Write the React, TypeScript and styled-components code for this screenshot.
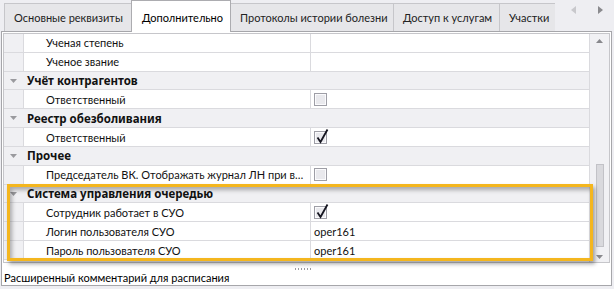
import React from "react";
import styled, { createGlobalStyle } from "styled-components";

const Global = createGlobalStyle`
  html, body { margin: 0; padding: 0; background: #eeeef2; }
  body { font-family: Lato, "Liberation Sans", Arial, sans-serif; font-size: 11px; color: #000; }
`;

const Root = styled.div`
  position: relative;
  width: 614px;
  height: 289px;
  overflow: hidden;
  background: #eeeef2;
`;

const TabStrip = styled.div`
  display: flex;
  height: 31px;
  padding-left: 4px;
`;

const TabList = styled.div`
  display: flex;
  align-items: flex-end;
  width: 551px;
  height: 32px;
  overflow: hidden;
  position: relative;
  z-index: 1;
`;

const Tab = styled.div<{ $active?: boolean; $w: number }>`
  box-sizing: border-box;
  flex: none;
  width: ${(p) => p.$w}px;
  height: ${(p) => (p.$active ? 32 : 28)}px;
  margin-bottom: ${(p) => (p.$active ? 0 : 1)}px;
  margin-right: -1px;
  padding: ${(p) => (p.$active ? "9px 0 0 10px" : "6px 0 0 9px")};
  border: 1px solid ${(p) => (p.$active ? "#acacb0" : "#c6c6ca")};
  border-bottom: none;
  background: ${(p) => (p.$active ? "#ffffff" : "#e6e6e9")};
  color: ${(p) => (p.$active ? "#000" : "#222")};
  white-space: nowrap;
  overflow: hidden;
  line-height: 16px;
  position: relative;
  z-index: ${(p) => (p.$active ? 2 : 1)};
`;

const Nav = styled.div`
  display: flex;
  gap: 20px;
  padding: 6px 0 0 16px;
`;

const NavArrow = styled.svg<{ $dim?: boolean }>`
  width: 6px;
  height: 8px;
  fill: ${(p) => (p.$dim ? "#c8c8cc" : "#8a8a8e")};
`;

const Page = styled.div`
  box-sizing: border-box;
  width: 611px;
  height: 255px;
  margin-left: 1px;
  border: 1px solid #a6a6aa;
  background: #ffffff;
  padding: 1px 1px 0;
  display: flex;
  flex-direction: column;
`;

const Grid = styled.div`
  box-sizing: border-box;
  height: 230px;
  border: 1px solid #c6c6ca;
  display: flex;
  flex: none;
`;

const Rows = styled.div`
  flex: 1;
  overflow: hidden;
  display: flex;
  flex-direction: column;
`;

const Row = styled.div<{ $category?: boolean }>`
  box-sizing: border-box;
  flex: none;
  height: 18.83px;
  display: flex;
  align-items: stretch;
  border-bottom: 1px solid #dadade;
  background: ${(p) => (p.$category ? "#f0f0f3" : "#ffffff")};
`;

const Indent = styled.div`
  flex: none;
  width: 19px;
  background: #f0f0f3;
  border-right: 1px solid #dadade;
`;

const Expander = styled.div`
  flex: none;
  width: 19px;
  display: flex;
  align-items: center;
  justify-content: center;
`;

const CategoryTitle = styled.div`
  font-family: "Noto Sans", "Liberation Sans", sans-serif;
  font-weight: 700;
  font-size: 11.5px;
  color: #111;
  padding-left: 4px;
  display: flex;
  align-items: center;
  white-space: nowrap;
`;

const NameCell = styled.div`
  box-sizing: border-box;
  flex: none;
  width: 287px;
  padding-left: 22px;
  border-right: 1px solid #dadade;
  display: flex;
  align-items: center;
  white-space: nowrap;
  overflow: hidden;
  color: #111;
`;

const ValueCell = styled.div`
  flex: 1;
  padding-left: 3px;
  display: flex;
  align-items: center;
  color: #111;
  white-space: nowrap;
`;

const Box = styled.div`
  position: relative;
  box-sizing: border-box;
  width: 13px;
  height: 13px;
  border: 1px solid #9e9ea6;
  background: #e9e9ed;
  box-shadow: inset 0 0 0 1px #fbfbfd;
`;

const Tick = styled.svg`
  position: absolute;
  left: 0px;
  top: -4px;
  width: 14px;
  height: 16px;
  overflow: visible;
`;

const ScrollBar = styled.div`
  flex: none;
  width: 20px;
  box-sizing: border-box;
  border-left: 1px solid #dadade;
  background: #f1f1f4;
  display: flex;
  flex-direction: column;
  align-items: center;
  padding: 5px 0 3px;
`;

const ScrollArrow = styled.svg`
  width: 7px;
  height: 4px;
  fill: #88888c;
  flex: none;
`;

const ScrollTrack = styled.div`
  flex: 1;
  width: 100%;
  display: flex;
  flex-direction: column;
  align-items: center;
  padding-top: 121px;
  padding-bottom: 8px;
  box-sizing: border-box;
`;

const Thumb = styled.div`
  flex: 1;
  width: 8px;
  box-sizing: border-box;
  background: #d9d9dd;
  border: 1px solid #c2c2c7;
`;

const Splitter = styled.div`
  flex: none;
  height: 8px;
  display: flex;
  justify-content: center;
  align-items: flex-end;
  padding: 0 8px 1px 0;
  box-sizing: border-box;
`;

const Grip = styled.div`
  width: 18px;
  height: 2px;
  background-image: radial-gradient(circle, #9a9aa0 0.7px, transparent 0.8px);
  background-size: 3px 2px;
`;

const Description = styled.div`
  flex: 1;
  padding-left: 1px;
  line-height: 14px;
  color: #000;
  white-space: nowrap;
`;

const Highlight = styled.div`
  position: absolute;
  left: 7px;
  top: 184px;
  width: 586px;
  height: 77px;
  box-sizing: border-box;
  border: 3px solid #f4b61e;
  box-shadow: 2px 3px 4px rgba(0, 0, 0, 0.35), inset 2px 3px 4px rgba(0, 0, 0, 0.3);
  pointer-events: none;
`;

type Item =
  | { kind: "cat"; title: string }
  | { kind: "prop"; name: string; value?: string; check?: boolean };

const items: Item[] = [
  { kind: "prop", name: "Ученая степень" },
  { kind: "prop", name: "Ученое звание" },
  { kind: "cat", title: "Учёт контрагентов" },
  { kind: "prop", name: "Ответственный", check: false },
  { kind: "cat", title: "Реестр обезболивания" },
  { kind: "prop", name: "Ответственный", check: true },
  { kind: "cat", title: "Прочее" },
  { kind: "prop", name: "Председатель ВК. Отображать журнал ЛН при в…", check: false },
  { kind: "cat", title: "Система управления очередью" },
  { kind: "prop", name: "Сотрудник работает в СУО", check: true },
  { kind: "prop", name: "Логин пользователя СУО", value: "oper161" },
  { kind: "prop", name: "Пароль пользователя СУО", value: "oper161" },
];

const tabs = [
  { label: "Основные реквизиты", w: 128 },
  { label: "Дополнительно", w: 100, active: true },
  { label: "Протоколы истории болезни", w: 164 },
  { label: "Доступ к услугам", w: 107 },
  { label: "Участки", w: 70 },
];

const CheckBox = ({ checked }: { checked: boolean }) => (
  <Box>
    {checked && (
      <Tick viewBox="0 0 14 16">
        <path d="M2.5 9.5 L5.5 14 L12.5 1.5" fill="none" stroke="#151520" strokeWidth="1.8" strokeLinejoin="miter" />
      </Tick>
    )}
  </Box>
);

export default function App() {
  return (
    <Root>
      <Global />
      <TabStrip>
        <TabList>
          {tabs.map((t) => (
            <Tab key={t.label} $w={t.w} $active={t.active}>
              {t.label}
            </Tab>
          ))}
        </TabList>
        <Nav>
          <NavArrow $dim viewBox="0 0 6 8">
            <path d="M5 0 L5 8 L0 4 Z" />
          </NavArrow>
          <NavArrow viewBox="0 0 6 8">
            <path d="M1 0 L1 8 L6 4 Z" />
          </NavArrow>
        </Nav>
      </TabStrip>
      <Page>
        <Grid>
          <Rows>
            {items.map((it, i) =>
              it.kind === "cat" ? (
                <Row key={i} $category>
                  <Expander>
                    <svg width="7" height="4" viewBox="0 0 7 4">
                      <path d="M0 0 H7 L3.5 4 Z" fill="#9a9a9e" />
                    </svg>
                  </Expander>
                  <CategoryTitle>{it.title}</CategoryTitle>
                </Row>
              ) : (
                <Row key={i}>
                  <Indent />
                  <NameCell>{it.name}</NameCell>
                  <ValueCell>
                    {it.check !== undefined ? <CheckBox checked={it.check} /> : it.value}
                  </ValueCell>
                </Row>
              )
            )}
          </Rows>
          <ScrollBar>
            <ScrollArrow viewBox="0 0 7 4">
              <path d="M0 4 H7 L3.5 0 Z" />
            </ScrollArrow>
            <ScrollTrack>
              <Thumb />
            </ScrollTrack>
            <ScrollArrow viewBox="0 0 7 4">
              <path d="M0 0 H7 L3.5 4 Z" />
            </ScrollArrow>
          </ScrollBar>
        </Grid>
        <Splitter>
          <Grip />
        </Splitter>
        <Description>Расширенный комментарий для расписания</Description>
      </Page>
      <Highlight />
    </Root>
  );
}
